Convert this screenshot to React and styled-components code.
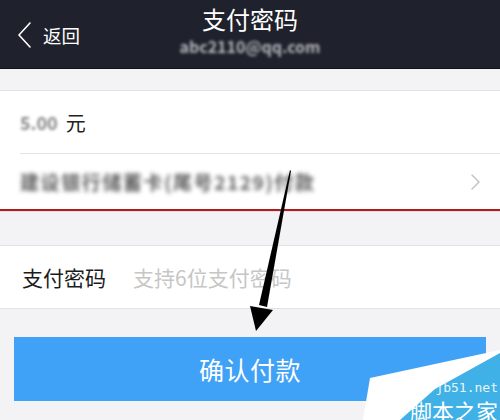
import styled, { createGlobalStyle } from "styled-components";

const GlobalStyle = createGlobalStyle`
  html, body {
    margin: 0;
    padding: 0;
    background: #f3f3f6;
    font-family: "Noto Sans CJK SC", "Noto Sans", sans-serif;
  }
  #root {
    width: 500px;
    height: 420px;
    overflow: hidden;
  }
`;

const Page = styled.main`
  position: relative;
  width: 500px;
  height: 420px;
  background: #f3f3f6;
  overflow: hidden;
`;

const NavBar = styled.header`
  height: 68px;
  background: #1f222d;
  border-bottom: 1px solid #0f1016;
  display: grid;
  grid-template-columns: 1fr auto 1fr;
  align-items: center;
`;

const BackButton = styled.div`
  display: flex;
  align-items: center;
  gap: 11px;
  padding-left: 17px;
  color: #ffffff;
  font-size: 18.5px;
  margin-top: 2px;
`;

const TitleBlock = styled.div`
  display: flex;
  flex-direction: column;
  align-items: center;
  color: #ffffff;
`;

const Title = styled.h1`
  margin: 0;
  font-size: 24px;
  font-weight: 400;
  line-height: 30px;
  margin-top: -6px;
`;

const Blurred = styled.span`
  filter: blur(${(p) => p.$blur || 1.6}px);
  color: ${(p) => p.$color || "#777"};
  font-size: ${(p) => p.$size || 16}px;
  font-weight: 700;
  letter-spacing: ${(p) => p.$spacing || 0}px;
`;

const Gap = styled.div`
  height: ${(p) => p.$h}px;
`;

const Section = styled.section`
  background: #ffffff;
  border-top: 1px solid #e2e2e6;
  border-bottom: 1px solid ${(p) => p.$bottom || "#e2e2e6"};
`;

const Row = styled.div`
  height: ${(p) => p.$h}px;
  display: flex;
  align-items: center;
  padding: 0 20px;
  color: #222;
  font-size: 20px;
`;

const Unit = styled.span`
  margin-left: 8px;
`;

const Divider = styled.div`
  height: 1px;
  margin-left: 20px;
  background: #e2e2e6;
`;

const Grow = styled.div`
  flex: 1;
  display: flex;
  align-items: center;
`;

const RedLine = styled.div`
  height: 2px;
  background: #b31c1c;
`;

const Label = styled.span`
  font-size: 21px;
  color: #1c1c1c;
  width: 111px;
  padding-left: 2px;
`;

const Placeholder = styled.span`
  font-size: 21px;
  color: #c6c6c6;
`;

const PayButton = styled.button`
  display: block;
  margin: 0 14px;
  width: 472px;
  height: 64px;
  border: none;
  background: #3fa2f6;
  color: #ffffff;
  font-family: inherit;
  font-size: 25px;
  letter-spacing: 0.5px;
`;

const Overlay = styled.svg`
  position: absolute;
  left: 0;
  top: 0;
  pointer-events: none;
`;

const Watermark = styled.div`
  position: absolute;
  right: 0;
  bottom: 0;
  width: 140px;
  height: 75px;
`;

const WatermarkLines = styled.div`
  position: absolute;
  right: 2px;
  bottom: -2px;
  display: flex;
  flex-direction: column;
  align-items: flex-end;
  gap: 3px;
`;

const WatermarkText = styled.div`
  color: ${(p) => p.$color};
  font-size: ${(p) => p.$size}px;
  font-family: ${(p) => p.$font};
  line-height: 1.1;
  white-space: nowrap;
`;

function Chevron({ color, width, height, stroke, dir = "left" }) {
  const d = dir === "left" ? "M13 1 L2 13 L13 25" : "M1 1 L8 8 L1 15";
  return (
    <svg width={width} height={height} viewBox={dir === "left" ? "0 0 15 26" : "0 0 9 16"}>
      <path d={d} fill="none" stroke={color} strokeWidth={stroke} strokeLinecap="round" strokeLinejoin="round" />
    </svg>
  );
}

export default function App() {
  return (
    <>
      <GlobalStyle />
      <Page>
        <NavBar>
          <BackButton>
            <Chevron color="#fff" width={15} height={26} stroke={1.6} />
            返回
          </BackButton>
          <TitleBlock>
            <Title>支付密码</Title>
            <Blurred $color="#b5b5ba" $size={16} $blur={1.8}>abc2110@qq.com</Blurred>
          </TitleBlock>
          <div />
        </NavBar>

        <Gap $h={21} />

        <Section $bottom="#e2e2e6">
          <Row $h={62}>
            <Blurred $size={18} $blur={1.8} $color="#888">5.00</Blurred>
            <Unit>元</Unit>
          </Row>
          <Divider />
          <Row $h={55}>
            <Grow>
              <Blurred $size={19} $blur={2.2} $color="#606060" $spacing={1.6}>
                建设银行储蓄卡(尾号2129)付款
              </Blurred>
            </Grow>
            <Chevron color="#c4c4c4" width={9} height={16} stroke={1.5} dir="right" />
          </Row>
          <RedLine />
        </Section>

        <Gap $h={33} />

        <Section>
          <Row $h={62}>
            <Label>支付密码</Label>
            <Placeholder>支持6位支付密码</Placeholder>
          </Row>
        </Section>

        <Gap $h={28} />

        <PayButton>确认付款</PayButton>

        <Overlay width="500" height="420" viewBox="0 0 500 420">
          <polygon points="290,170 291,171 267,307 259,305" fill="#000" />
          <polygon points="250,306 273,310 256,331" fill="#000" />
        </Overlay>

        <Watermark>
          <Overlay width="140" height="75" viewBox="0 0 140 75">
            <polygon points="10,33 140,5 140,75 3,75" fill="#ffffff" />
            <polygon points="140,8 140,75 40,75 75,44" fill="#3fb1e6" />
          </Overlay>
          <WatermarkLines>
            <WatermarkText $size={13} $color="#e8f4fa" $font={`"DejaVu Sans Mono", monospace`}>
              jb51.net
            </WatermarkText>
            <WatermarkText $size={22} $color="#ffffff" $font={`"Noto Sans CJK SC", sans-serif`}>
              脚本之家
            </WatermarkText>
          </WatermarkLines>
        </Watermark>
      </Page>
    </>
  );
}
